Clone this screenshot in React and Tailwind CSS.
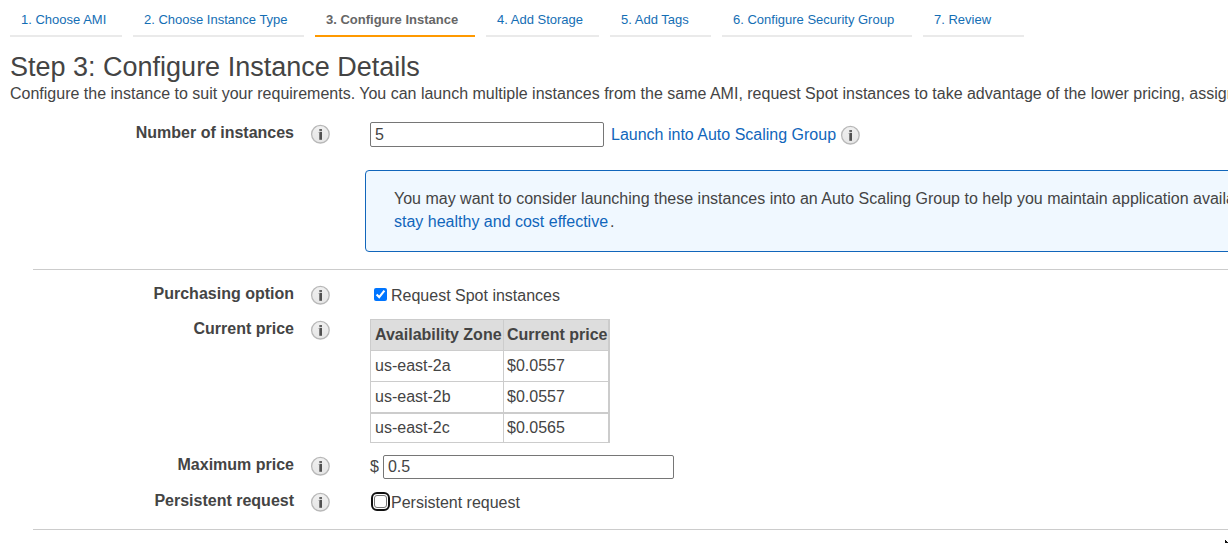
import React, { useId } from "react";

const steps = [
  { label: "1. Choose AMI", size: "w-[112px]" },
  { label: "2. Choose Instance Type", size: "w-[171px]" },
  { label: "3. Configure Instance", size: "w-[160px]", active: true },
  { label: "4. Add Storage", size: "w-[113px]" },
  { label: "5. Add Tags", size: "w-[101px]" },
  { label: "6. Configure Security Group", size: "w-[190px]" },
  { label: "7. Review", size: "w-[101px]" },
];

const prices = [
  { zone: "us-east-2a", price: "$0.0557" },
  { zone: "us-east-2b", price: "$0.0557" },
  { zone: "us-east-2c", price: "$0.0565" },
];

function InfoIcon({ label }) {
  const id = useId();
  return (
    <button type="button" aria-label={label} className="size-5 shrink-0">
      <svg viewBox="0 0 20 20" className="size-5" aria-hidden="true">
        <defs>
          <linearGradient id={id} x1="0" y1="0" x2="0" y2="1">
            <stop offset="0" stopColor="#f0f0f0" />
            <stop offset="1" stopColor="#e6e6e6" />
          </linearGradient>
        </defs>
        <circle cx="10.4" cy="10.2" r="8.8" fill={`url(#${id})`} stroke="#b8b8b8" strokeWidth="1.3" />
        <path d="M9.3 5h2.7v2.2H9.3z" fill="#666" />
        <path d="M9.3 8h2.7v7.8H9.3z" fill="#505050" />
        <path d="M8.5 8h.8v1h-.8z" fill="#aaa" />
      </svg>
    </button>
  );
}

function Row({ label, htmlFor, children, className = "" }) {
  return (
    <div className={`flex items-start ${className}`}>
      <div className="flex w-[370px] shrink-0 items-start">
        <label htmlFor={htmlFor} className="w-[294px] text-right font-bold leading-5">
          {label}
        </label>
        <div className="ml-4 mt-px flex">
          <InfoIcon label={`About ${label}`} />
        </div>
      </div>
      {children}
    </div>
  );
}

const field = "rounded-xs border border-[#767676] bg-white px-1 leading-5 outline-none";

export default function App() {
  return (
    <div className="relative min-h-screen overflow-hidden bg-white font-['Liberation_Sans',Arial,sans-serif] text-base text-[#444]">
      <nav aria-label="Launch steps" className="flex gap-[11px] whitespace-nowrap pl-2.5 text-[13px]">
        {steps.map((s) => (
          <a
            key={s.label}
            href="#"
            aria-current={s.active ? "step" : undefined}
            className={`${s.size} h-[37px] shrink-0 border-b-2 pl-[11px] pt-2.5 leading-5 ${
              s.active ? "border-[#f90] font-bold text-[#666]" : "border-[#eaeaea] text-[#146eb4]"
            }`}
          >
            {s.label}
          </a>
        ))}
      </nav>

      <header className="whitespace-nowrap pl-2.5 pt-3.5">
        <h1 className="text-[27px] leading-[33px]">Step 3: Configure Instance Details</h1>
        <p className="leading-5">
          Configure the instance to suit your requirements. You can launch multiple instances from the same AMI, request
          Spot instances to take advantage of the lower pricing, assign an access management role to the instance, and
          more.
        </p>
      </header>

      <main>
        <Row label="Number of instances" htmlFor="count" className="pt-[19px]">
          <div className="-mt-px flex items-center whitespace-nowrap">
            <input id="count" defaultValue="5" className={`${field} h-[25px] w-[234px]`} />
            <a href="#" className="ml-[7px] text-[#1166bb]">
              Launch into Auto Scaling Group
            </a>
            <div className="ml-1 flex">
              <InfoIcon label="About Auto Scaling" />
            </div>
          </div>
        </Row>

        <div className="ml-[365px] mt-[23px]">
          <div className="w-max rounded border border-[#1166bb] bg-[#f0f8ff] px-7 pb-[18px] pt-4 leading-[23px]">
            <p className="whitespace-nowrap">
              You may want to consider launching these instances into an Auto Scaling Group to help you maintain
              application availability. Learn how Auto Scaling can help your application
              <br />
              <a href="#" className="pr-0.5 text-[#1166bb]">
                stay healthy and cost effective
              </a>
              .
            </p>
          </div>
        </div>

        <section className="mt-[17px]">
          <hr className="ml-[33px] border-[#ccc]" />
          <Row label="Purchasing option" htmlFor="spot" className="pt-3.5">
            <label className="flex items-center leading-6">
              <input id="spot" type="checkbox" defaultChecked className="mx-1 mb-1 size-[13px] accent-[#0075ff]" />
              Request Spot instances
            </label>
          </Row>
          <div className="-mt-px">
            <Row label="Current price" className="pt-3">
              <table className="border-collapse whitespace-nowrap border border-r-2 border-[#ccc] text-left leading-5">
                <thead className="bg-[#ddd]">
                  <tr className="h-[31px]">
                    <th className="w-[133px] border border-[#ccc] pl-1 pr-px">Availability Zone</th>
                    <th className="border border-r-2 border-[#ccc] pl-[3px] pr-px">Current price</th>
                  </tr>
                </thead>
                <tbody>
                  {prices.map((p) => (
                    <tr key={p.zone} className="h-[31px] last:h-[30px] last:border-t-2 last:border-[#ccc]">
                      <td className="border border-[#ccc] pl-1 pr-px">{p.zone}</td>
                      <td className="border border-r-2 border-[#ccc] pl-[3px] pr-px">{p.price}</td>
                    </tr>
                  ))}
                </tbody>
              </table>
            </Row>
          </div>
          <Row label="Maximum price" htmlFor="max" className="pt-3">
            <div className="flex items-center gap-1">
              <span>$</span>
              <input id="max" defaultValue="0.5" className={`${field} h-6 w-[291px]`} />
            </div>
          </Row>
          <Row label="Persistent request" htmlFor="persistent" className="pt-3">
            <label className="flex items-center leading-6">
              <input
                id="persistent"
                type="checkbox"
                className="mx-1 mb-1 size-[13px] appearance-none rounded-[3px] border border-[#767676] bg-white outline-2 outline-offset-1 outline-[#101010] checked:border-[#0075ff] checked:bg-[#0075ff]"
              />
              Persistent request
            </label>
          </Row>
          <hr className="ml-[33px] mt-3.5 border-[#ccc]" />
        </section>
      </main>

      <svg viewBox="0 0 3 3" className="absolute bottom-0 right-0 size-[3px]" aria-hidden="true">
        <path d="M0 0h1v1h1v1h1v1H0z" fill="#111" />
      </svg>
    </div>
  );
}
